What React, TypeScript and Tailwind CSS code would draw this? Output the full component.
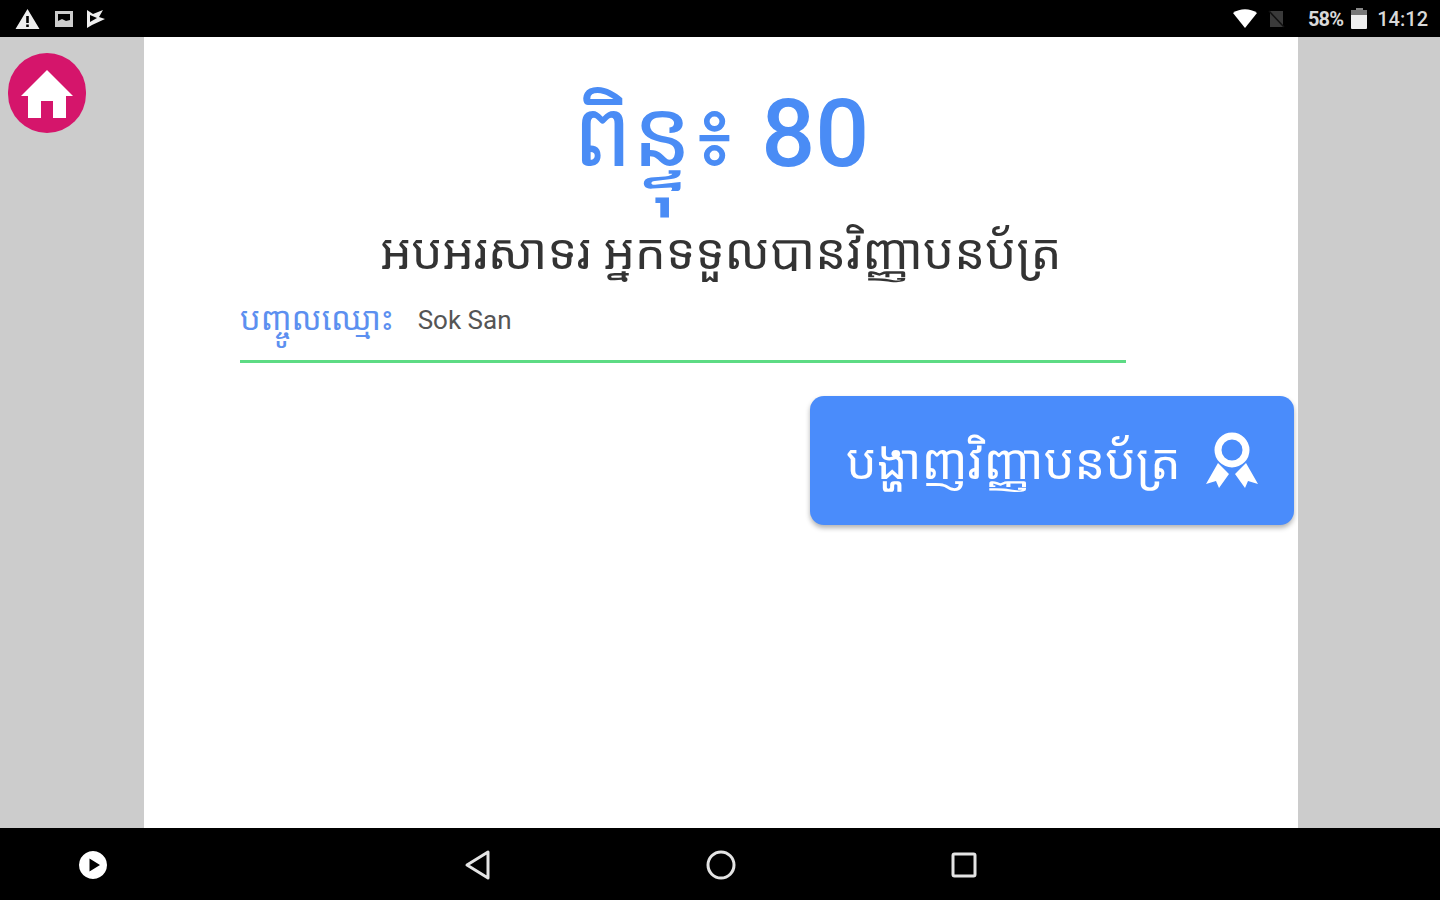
const khmer = "font-['Noto_Sans_Khmer','Khmer_OS','Noto_Sans','DejaVu_Sans',sans-serif]";

function StatusBar() {
  return (
    <div className="flex h-[37px] items-center justify-between bg-black pl-[15px] pr-[12px] text-[#e4e4e4]">
      <div className="flex items-center gap-[14px]">
        <svg width="25" height="22" viewBox="0 0 25 22">
          <path fillRule="evenodd" fill="#eee" d="M12.5 1 L24.5 21 H0.5 Z M11.2 8 V15 H13.8 V8 Z M11.2 16.5 V19 H13.8 V16.5 Z" />
        </svg>
        <svg width="20" height="18" viewBox="0 0 20 18">
          <path fillRule="evenodd" fill="#ccc" d="M1 1 H19 V17 H1 Z M4 4 V11 L8 9 L12 11 L16 10 V4 Z" />
        </svg>
        <svg width="22" height="20" viewBox="0 0 22 20" className="-ml-[3px]">
          <path fillRule="evenodd" fill="#eee" d="M2 1 L8 5 L18 1 L14 8 L20 10 L7 16 L2 19 Z M5 6 V13 L12 9 Z" />
        </svg>
      </div>
      <div className="flex items-center">
        <svg width="26" height="20" viewBox="0 0 26 20">
          <path fill="#fff" d="M1 4 C8 -1 18 -1 25 4 L13 19 Z" />
        </svg>
        <svg width="20" height="20" viewBox="0 0 20 20" className="ml-[9px]">
          <path fill="#3a3a3a" d="M3 2 H16 V18 H3 Z" />
          <path stroke="#111" strokeWidth="1.5" d="M2 2 L17 18" />
        </svg>
        <span className="ml-[21px] font-['Roboto',sans-serif] text-[20px] font-bold tracking-[-0.8px] text-[#d8d8d8]">58%</span>
        <div className="ml-[8px] flex h-[21px] w-[16px] flex-col">
          <div className="mx-auto h-[2px] w-[7px] bg-[#888]" />
          <div className="h-[5px] bg-[#777]" />
          <div className="flex-1 rounded-b-[1px] bg-[#eee]" />
        </div>
        <span className="ml-[10px] font-['Roboto',sans-serif] text-[20px] font-medium text-[#d8d8d8]">14:12</span>
      </div>
    </div>
  );
}

function NavBar() {
  return (
    <div className="flex h-[72px] items-center bg-black pl-[78px] pt-[2px]">
      <svg width="30" height="30" viewBox="0 0 30 30">
        <path fillRule="evenodd" fill="#fff" d="M15 1 a14 14 0 1 0 0.01 0 Z M11.5 8.5 L22 15 L11.5 21.5 Z" />
      </svg>
      <svg width="28" height="32" viewBox="0 0 28 32" className="ml-[356px]">
        <path fill="none" stroke="#e4e4e4" strokeWidth="3" strokeLinejoin="round" d="M24 3 V29 L3 16 Z" />
      </svg>
      <svg width="32" height="32" viewBox="0 0 32 32" className="ml-[213px]">
        <circle cx="16" cy="16" r="13" fill="none" stroke="#e4e4e4" strokeWidth="3" />
      </svg>
      <svg width="28" height="28" viewBox="0 0 28 28" className="ml-[213px]">
        <rect x="3" y="3" width="22" height="22" rx="1.5" fill="none" stroke="#e4e4e4" strokeWidth="3" />
      </svg>
    </div>
  );
}

export default function App() {
  return (
    <div className="flex h-screen flex-col overflow-hidden bg-white">
      <StatusBar />
      <div className="flex flex-1">
        <aside className="w-[144px] bg-[#cccccc] pl-[8px] pt-[16px]">
          <div className="flex h-[80px] w-[78px] items-center justify-center rounded-full bg-[#d5156b] pt-[2px]">
            <svg width="54" height="52" viewBox="0 0 54 52">
              <path fill="#fff" d="M27 2 L53 28 H46 V50 H33 V33 H21 V50 H8 V28 H1 Z" />
            </svg>
          </div>
        </aside>
        <main className={`flex flex-1 flex-col ${khmer}`}>
          <h1 className="mt-[23px] text-center text-[94px] leading-[140px] font-normal text-[#4a8cf5]">
            ពិន្ទុ៖ <span className="font-['Roboto',sans-serif] text-[95px] font-medium">80</span>
          </h1>
          <p className="mt-[17px] text-center text-[49px] leading-[58px] text-[#333333]">អបអរសាទរ អ្នកទទួលបានវិញ្ញាបនប័ត្រ</p>
          <div className="ml-[96px] mt-[10px] flex h-[74px] w-[886px] items-start border-b-[3px] border-[#5ddb84] pt-[7px]">
            <span className="text-[32.5px] leading-[44px] text-[#5c90f0]">បញ្ចូលឈ្មោះ</span>
            <span className="ml-[24px] mt-[7px] font-['Roboto',sans-serif] text-[26px] leading-[34px] text-[#555555]">Sok San</span>
          </div>
          <div className="mr-[4px] mt-[33px] flex justify-end">
            <button className="flex h-[129px] w-[484px] items-center rounded-[14px] bg-[#4a8cfb] pl-[36px] shadow-[0_3px_5px_rgba(0,0,0,0.3)]">
              <span className="text-[48.5px] text-white">បង្ហាញវិញ្ញាបនប័ត្រ</span>
              <svg width="54" height="62" viewBox="0 0 54 62" className="ml-auto mr-[35px]">
                <circle cx="27" cy="20" r="14" fill="none" stroke="#fff" strokeWidth="7" />
                <path fill="#fff" d="M13 33 L21 41 L24 44 L14 58 L11 51 L1 54 Z M41 33 L33 41 L30 44 L40 58 L43 51 L53 54 Z" />
              </svg>
            </button>
          </div>
        </main>
        <aside className="w-[142px] bg-[#cccccc]" />
      </div>
      <NavBar />
    </div>
  );
}
